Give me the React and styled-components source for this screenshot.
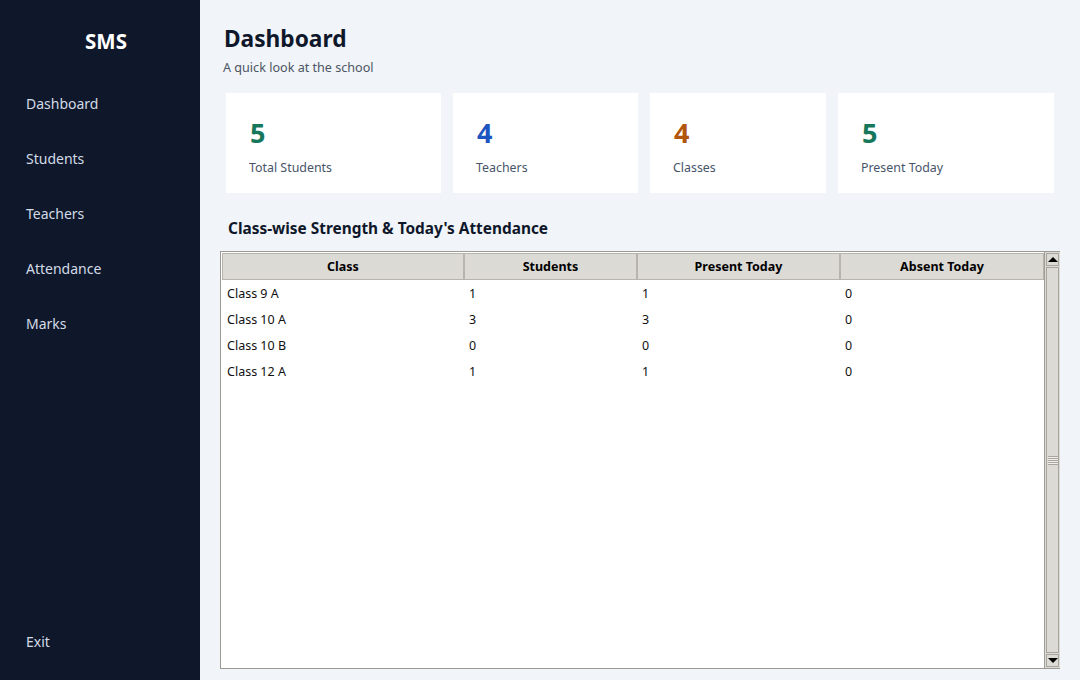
import styled, { createGlobalStyle } from "styled-components";

const GlobalStyle = createGlobalStyle`
  html, body {
    margin: 0;
    padding: 0;
    background: #f1f4f9;
  }
  * {
    box-sizing: border-box;
  }
`;

const stats = [
  { id: 1, value: 5, label: "Total Students", color: "#16775a", width: 215 },
  { id: 2, value: 4, label: "Teachers", color: "#1d55c0", width: 185 },
  { id: 3, value: 4, label: "Classes", color: "#b2560e", width: 176 },
  { id: 4, value: 5, label: "Present Today", color: "#16775a", width: 216 },
];

const rows = [
  { name: "Class 9 A", students: 1, present: 1, absent: 0 },
  { name: "Class 10 A", students: 3, present: 3, absent: 0 },
  { name: "Class 10 B", students: 0, present: 0, absent: 0 },
  { name: "Class 12 A", students: 1, present: 1, absent: 0 },
];

const columns = ["Class", "Students", "Present Today", "Absent Today"];

function App() {
  return (
    <>
      <GlobalStyle />
      <Frame>
        <Sidebar>
          <Brand>SMS</Brand>
          <Nav>
            <NavItem>Dashboard</NavItem>
            <NavItem>Students</NavItem>
            <NavItem>Teachers</NavItem>
            <NavItem>Attendance</NavItem>
            <NavItem>Marks</NavItem>
          </Nav>
          <NavItem>Exit</NavItem>
        </Sidebar>

        <Main>
          <Title>Dashboard</Title>
          <Subtitle>A quick look at the school</Subtitle>

          <Cards>
            {stats.map((s) => (
              <Card key={s.id} $width={s.width}>
                <StatValue $color={s.color}>{s.value}</StatValue>
                <StatLabel>{s.label}</StatLabel>
              </Card>
            ))}
          </Cards>

          <SectionTitle>Class-wise Strength &amp; Today's Attendance</SectionTitle>

          <TableBox>
            <TableArea>
              <HeaderRow>
                {columns.map((c) => (
                  <HeaderCell key={c}>{c}</HeaderCell>
                ))}
              </HeaderRow>
              {rows.map((r) => (
                <Row key={r.name}>
                  <Cell>{r.name}</Cell>
                  <Cell>{r.students}</Cell>
                  <Cell>{r.present}</Cell>
                  <Cell>{r.absent}</Cell>
                </Row>
              ))}
            </TableArea>
            <ScrollBar>
              <ScrollButton>
                <Arrow />
              </ScrollButton>
              <Thumb>
                <Grip />
              </Thumb>
              <ScrollButton>
                <Arrow $down />
              </ScrollButton>
            </ScrollBar>
          </TableBox>
        </Main>
      </Frame>
    </>
  );
}

export default App;

const Frame = styled.div`
  display: flex;
  width: 1080px;
  height: 680px;
  font-family: "Noto Sans", "Open Sans", sans-serif;
  overflow: hidden;
`;

const Sidebar = styled.aside`
  width: 200px;
  flex-shrink: 0;
  background: #0f182b;
  display: flex;
  flex-direction: column;
  padding: 27px 0 11px;
`;

const Brand = styled.div`
  color: #ffffff;
  font-size: 20.5px;
  font-weight: 700;
  line-height: 28px;
  text-align: center;
  padding-left: 12px;
  margin-bottom: 21px;
`;

const Nav = styled.nav`
  display: flex;
  flex-direction: column;
  flex: 1;
`;

const NavItem = styled.div`
  color: #d3dbe7;
  font-size: 14px;
  line-height: 55px;
  height: 55px;
  padding-left: 26px;
`;

const Main = styled.main`
  flex: 1;
  display: flex;
  flex-direction: column;
  padding: 23px 20px 11px;
  min-width: 0;
`;

const Title = styled.h1`
  margin: 0 0 0 4px;
  font-size: 22.7px;
  font-weight: 700;
  line-height: 32px;
  color: #0f172a;
`;

const Subtitle = styled.div`
  margin: 4px 0 0 3px;
  font-size: 12.6px;
  line-height: 18px;
  color: #4b5563;
`;

const Cards = styled.div`
  display: flex;
  gap: 12px;
  margin: 16px 6px 0;
`;

const Card = styled.div`
  width: ${(p) => p.$width}px;
  height: 100px;
  background: #ffffff;
  padding: 24px 23px 0;
`;

const StatValue = styled.div`
  font-size: 27px;
  font-weight: 700;
  line-height: 32px;
  padding-left: 1px;
  color: ${(p) => p.$color};
`;

const StatLabel = styled.div`
  margin-top: 10px;
  font-size: 12.4px;
  line-height: 18px;
  color: #475569;
`;

const SectionTitle = styled.h2`
  margin: 26px 0 0 8px;
  font-size: 15.4px;
  font-weight: 700;
  line-height: 20px;
  color: #0f172a;
`;

const TableBox = styled.div`
  margin-top: 12px;
  flex: 1;
  display: flex;
  border: 1px solid #9d9a94;
  background: #ffffff;
  min-height: 0;
`;

const TableArea = styled.div`
  flex: 1;
  padding: 1px 0 0 1px;
  font-size: 12.5px;
  color: #111111;
`;

const gridCols = "242px 173px 203px 204px";

const HeaderRow = styled.div`
  display: grid;
  grid-template-columns: ${gridCols};
  height: 27px;
`;

const HeaderCell = styled.div`
  background: #dcdad5;
  border-top: 1px solid #f4f3f1;
  border-left: 1px solid #f4f3f1;
  border-right: 1px solid #a09d97;
  border-bottom: 1px solid #a09d97;
  outline: 1px solid #b7b3ad;
  outline-offset: -1px;
  display: flex;
  align-items: center;
  justify-content: center;
  font-weight: 700;
  font-size: 12.5px;
  color: #000000;
`;

const Row = styled.div`
  display: grid;
  grid-template-columns: ${gridCols};
  height: 26px;
  align-items: center;
`;

const Cell = styled.div`
  padding-left: 5px;
`;

const ScrollBar = styled.div`
  width: 16px;
  flex-shrink: 0;
  background: #dcdad5;
  border-left: 1px solid #a09d97;
  display: flex;
  flex-direction: column;
  padding: 1px;
  gap: 1px;
`;

const ScrollButton = styled.div`
  height: 13px;
  background: #dcdad5;
  border: 1px solid #a8a59f;
  display: flex;
  align-items: center;
  justify-content: center;
`;

const Arrow = styled.div`
  width: 0;
  height: 0;
  border-left: 5px solid transparent;
  border-right: 5px solid transparent;
  ${(p) =>
    p.$down
      ? "border-top: 5px solid #000000;"
      : "border-bottom: 5px solid #000000;"}
`;

const Thumb = styled.div`
  flex: 1;
  background: #dcdad5;
  border: 1px solid #a8a59f;
  display: flex;
  align-items: center;
  justify-content: center;
`;

const Grip = styled.div`
  width: 10px;
  height: 9px;
  background: repeating-linear-gradient(
    to bottom,
    #a8a59f 0,
    #a8a59f 1px,
    #f0efec 1px,
    #f0efec 2px
  );
`;
